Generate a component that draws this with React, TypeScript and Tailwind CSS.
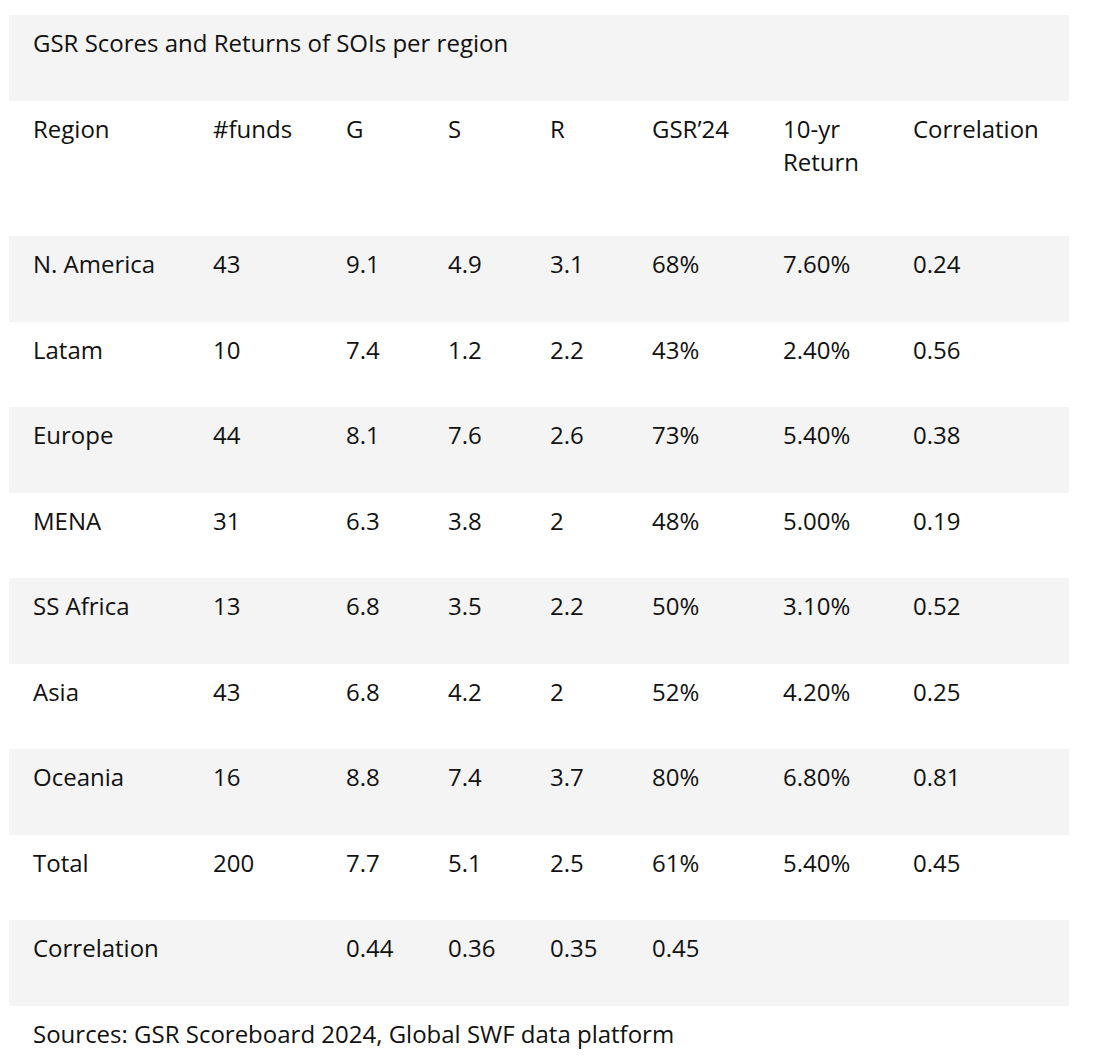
const cols = ['w-[180px]', 'w-[133px]', 'w-[102px]', 'w-[102px]', 'w-[102px]', 'w-[131px]', 'w-[130px]', 'w-[180px]'];

const header = ['Region', '#funds', 'G', 'S', 'R', 'GSR’24', '10-yr Return', 'Correlation'];

const rows: string[][] = [
  ['N. America', '43', '9.1', '4.9', '3.1', '68%', '7.60%', '0.24'],
  ['Latam', '10', '7.4', '1.2', '2.2', '43%', '2.40%', '0.56'],
  ['Europe', '44', '8.1', '7.6', '2.6', '73%', '5.40%', '0.38'],
  ['MENA', '31', '6.3', '3.8', '2', '48%', '5.00%', '0.19'],
  ['SS Africa', '13', '6.8', '3.5', '2.2', '50%', '3.10%', '0.52'],
  ['Asia', '43', '6.8', '4.2', '2', '52%', '4.20%', '0.25'],
  ['Oceania', '16', '8.8', '7.4', '3.7', '80%', '6.80%', '0.81'],
  ['Total', '200', '7.7', '5.1', '2.5', '61%', '5.40%', '0.45'],
  ['Correlation', '', '0.44', '0.36', '0.35', '0.45', '', ''],
];

function Row({ cells, shaded, tall }: { cells: string[]; shaded: boolean; tall?: boolean }) {
  return (
    <div className={`flex ${tall ? 'h-[135px]' : 'h-[85.5px]'} ${shaded ? 'bg-[#f4f4f4]' : ''}`}>
      {cells.map((c, i) => (
        <div key={i} className={`${cols[i]} shrink-0 pl-6 pr-2 pt-[11px]`}>
          {c}
        </div>
      ))}
    </div>
  );
}

export default function App() {
  return (
    <div
      className="min-h-screen bg-white pl-[9px] pt-[15px] text-[24px] leading-[33px] text-[#111]"
      style={{ fontFamily: '"Open Sans", "Noto Sans", sans-serif' }}
    >
      <div className="w-[1060px]">
        <div className="h-[86px] bg-[#f4f4f4] pl-6 pt-[11px]">GSR Scores and Returns of SOIs per region</div>
        <Row cells={header} shaded={false} tall />
        {rows.map((r, i) => (
          <Row key={r[0]} cells={r} shaded={i % 2 === 0} />
        ))}
        <div className="pl-6 pt-[11px]">Sources: GSR Scoreboard 2024, Global SWF data platform</div>
      </div>
    </div>
  );
}
